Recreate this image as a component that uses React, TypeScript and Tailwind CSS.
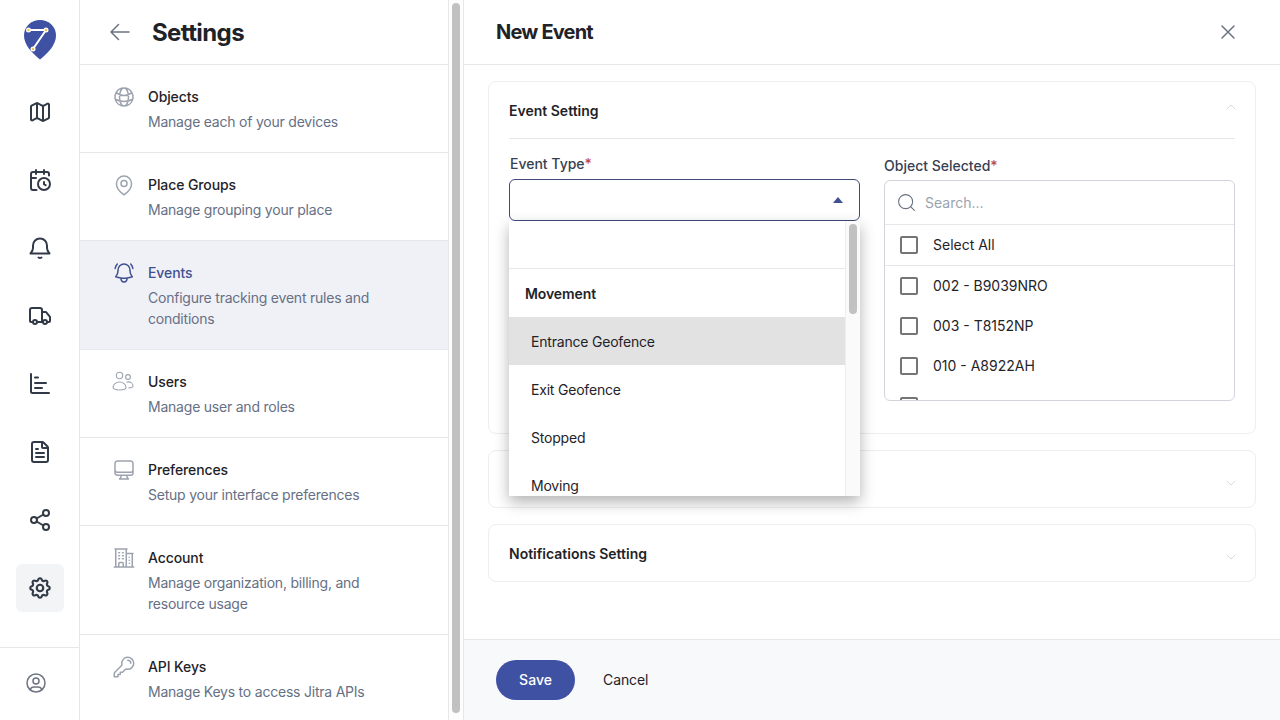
import type { ReactNode } from "react";
import { CalendarClock, ChevronDown, ChevronUp, FileText, Map, Search, Share2, Truck } from "lucide-react";
import { TbSettings, TbUserCircle } from "react-icons/tb";
import {
  HiOutlineArrowLeft,
  HiOutlineBellAlert,
  HiOutlineBuildingOffice2,
  HiOutlineComputerDesktop,
  HiOutlineGlobeAlt,
  HiOutlineKey,
  HiOutlineMapPin,
  HiOutlineXMark,
} from "react-icons/hi2";

function Logo() {
  return (
    <svg width="32" height="40" viewBox="0 0 32 40">
      <path d="M16 0C7 0 0 6.500 0 15.500C0 25 8 33 16 39.500C24 33 32 25 32 15.500C32 6.500 25 0 16 0Z" fill="#3f51a3" />
      <path d="M4.500 10H22L9 29" fill="none" stroke="#fff" strokeWidth="2" />
      <circle cx="4.500" cy="10" r="2.500" fill="#fff" />
      <circle cx="22" cy="10" r="2.500" fill="#fff" />
      <circle cx="9" cy="29" r="2.500" fill="#fff" />
      <circle cx="4.500" cy="10" r="1.300" fill="#e8c95a" />
      <circle cx="22" cy="10" r="1.300" fill="#e8c95a" />
      <circle cx="9" cy="29" r="1.300" fill="#e8c95a" />
    </svg>
  );
}

function BellIcon() {
  return (
    <svg width="24" height="24" viewBox="0 0 24 24" fill="none" stroke="currentColor" strokeWidth="2" strokeLinecap="round" strokeLinejoin="round">
      <path d="M2.500 17.500h19c-1.500-1.500-2.500-3-2.500-5.500V9.500a7 7 0 0 0-14 0V12c0 2.500-1 4-2.500 5.500Z" />
      <path d="M10.500 21.500c.8.500 2.200.500 3 0" />
    </svg>
  );
}

function ChartIcon() {
  return (
    <svg width="24" height="24" viewBox="0 0 24 24" fill="none" stroke="currentColor" strokeWidth="2" strokeLinecap="round" strokeLinejoin="round">
      <path d="M3 2V19.500a1.500 1.500 0 0 0 1.500 1.500H21" />
      <path d="M7 5.500h3" />
      <path d="M7 11h11" />
      <path d="M7 16h7" />
    </svg>
  );
}

function UsersIcon() {
  return (
    <svg width="22" height="22" viewBox="0 0 22 22" fill="none" stroke="currentColor" strokeWidth="1.100">
      <circle cx="7.500" cy="5.500" r="3.200" />
      <circle cx="16" cy="7" r="2.400" />
      <path d="M1 17.500c0-3 3-5.500 6.500-5.500s6.500 2.500 6.500 5.500c0 1.500-3 2.500-6.500 2.500S1 19 1 17.500Z" />
      <path d="M14.500 12.200c.5-.2 1-.3 1.700-.3 2.800 0 4.800 1.800 4.800 3.800 0 1.500-2 2.200-4.500 2.200" />
    </svg>
  );
}

const railItems: { key: string; icon: ReactNode; active?: boolean }[] = [
  { key: "map", icon: <Map size={24} strokeWidth={2} /> },
  { key: "calendar", icon: <CalendarClock size={24} strokeWidth={2} /> },
  { key: "bell", icon: <BellIcon /> },
  { key: "truck", icon: <Truck size={24} strokeWidth={2} /> },
  { key: "chart", icon: <ChartIcon /> },
  { key: "file", icon: <FileText size={24} strokeWidth={2} /> },
  { key: "share", icon: <Share2 size={24} strokeWidth={2} /> },
  { key: "settings", icon: <TbSettings size={26} strokeWidth={2} />, active: true },
];

const settingsRows = [
  { title: "Objects", desc: "Manage each of your devices", icon: <HiOutlineGlobeAlt size={24} /> },
  { title: "Place Groups", desc: "Manage grouping your place", icon: <HiOutlineMapPin size={24} /> },
  { title: "Events", desc: "Configure tracking event rules and conditions", icon: <HiOutlineBellAlert size={24} />, active: true },
  { title: "Users", desc: "Manage user and roles", icon: <UsersIcon /> },
  { title: "Preferences", desc: "Setup your interface preferences", icon: <HiOutlineComputerDesktop size={24} /> },
  { title: "Account", desc: "Manage organization, billing, and resource usage", icon: <HiOutlineBuildingOffice2 size={24} /> },
  { title: "API Keys", desc: "Manage Keys to access Jitra APIs", icon: <HiOutlineKey size={24} /> },
];

const eventTypes = ["Entrance Geofence", "Exit Geofence", "Stopped", "Moving"];
const objects = ["002 - B9039NRO", "003 - T8152NP", "010 - A8922AH"];

function Checkbox() {
  return <span className="w-[18px] h-[18px] shrink-0 border-2 border-[#757575] rounded-[2px]" />;
}

function SectionHeader({ title, open }: { title?: string; open?: boolean }) {
  return (
    <div className="h-14 flex items-center justify-between">
      <span className="pt-[2px] text-sm font-semibold text-[#1f2328]">{title}</span>
      {open ? (
        <ChevronUp size={16} strokeWidth={1.5} className="text-[#d8dbe0] -mr-[4px] -translate-y-[3px]" />
      ) : (
        <ChevronDown size={16} strokeWidth={1.5} className="text-[#d8dbe0] -mr-[4px] translate-y-[4px]" />
      )}
    </div>
  );
}

export default function App() {
  return (
    <div className="h-screen w-full flex overflow-hidden bg-white font-[Inter,sans-serif] text-[#1f2328]">
      <aside className="w-20 shrink-0 border-r border-[#e5e7eb] flex flex-col">
        <div className="pt-5 flex justify-center">
          <Logo />
        </div>
        <nav className="mt-7 flex flex-col items-center gap-5 flex-1 text-[#333a47]">
          {railItems.map((item) => (
            <div
              key={item.key}
              className={`w-12 h-12 flex items-center justify-center rounded-md ${item.active ? "bg-[#f3f4f6]" : ""}`}
            >
              {item.icon}
            </div>
          ))}
        </nav>
        <div className="h-[73px] border-t border-[#e5e7eb] flex items-center pl-[24px] pb-[2px] text-[#6b7280]">
          <TbUserCircle size={24} strokeWidth={1.5} />
        </div>
      </aside>

      <section className="w-[369px] shrink-0 border-r border-[#e5e7eb]">
        <div className="h-[65px] border-b border-[#e5e7eb] flex items-center pl-[28px]">
          <HiOutlineArrowLeft size={24} className="text-[#6b7280]" />
          <h1 className="ml-5 pt-px text-2xl font-bold tracking-[-0.6px] text-[#1f2328]">Settings</h1>
        </div>
        {settingsRows.map((row) => (
          <div
            key={row.title}
            className={`relative border-b border-[#e5e7eb] pl-[68px] pr-10 pt-[21px] pb-5 ${row.active ? "bg-[#f0f1f6]" : ""}`}
          >
            <div className={`absolute left-[32px] top-[20px] ${row.active ? "text-[#3f4f91]" : "text-[#9ca3af]"}`}>{row.icon}</div>
            <div className={`text-sm font-medium leading-[22px] tracking-[-0.1px] ${row.active ? "text-[#3f4f91]" : "text-[#1f2328]"}`}>{row.title}</div>
            <div className="mt-[3px] text-sm leading-[21px] tracking-[-0.22px] text-[#667085]">{row.desc}</div>
          </div>
        ))}
      </section>

      <div className="w-[15px] shrink-0 border-r border-[#e5e7eb] bg-[#fdfdfd] pt-[3px] pl-[3px]">
        <div className="w-2 h-[710px] rounded-full bg-[#c1c1c1]" />
      </div>

      <main className="flex-1 flex flex-col min-w-0">
        <header className="h-[65px] shrink-0 border-b border-[#e5e7eb] flex items-center justify-between pl-8 pr-[40px]">
          <h2 className="text-xl font-bold tracking-[-0.8px] text-[#1f2328]">New Event</h2>
          <HiOutlineXMark size={24} className="text-[#6b7280]" />
        </header>

        <div className="flex-1 px-6 pt-4 flex flex-col gap-4">
          <div className="border border-[#eceef1] rounded-lg px-5 pb-8">
            <SectionHeader title="Event Setting" open />
            <div className="border-t border-[#e5e7eb] flex gap-6">
              <div className="flex-1 pt-[15px]">
                <label className="block pl-px text-sm font-medium leading-5 text-[#374151] mb-[5px]">
                  Event Type<span className="text-[#c0484a]">*</span>
                </label>
                <div className="relative">
                  <div className="h-[42px] border border-[#3f4a7a] rounded-md flex items-center justify-end pr-4 bg-white">
                    <svg width="10" height="6" viewBox="0 0 10 6">
                      <polygon points="5,0 10,6 0,6" fill="#3f4f91" />
                    </svg>
                  </div>
                  <div className="absolute z-10 top-full left-0 right-0 h-[275px] flex bg-white overflow-hidden shadow-[0_6px_14px_rgba(0,0,0,0.3)]">
                    <div className="flex-1 overflow-hidden min-w-0">
                      <div className="h-[48px] border-b border-[#e5e7eb]" />
                      <div className="h-12 flex items-center pl-4 pt-[2px] text-sm font-semibold tracking-[-0.1px]">Movement</div>
                      {eventTypes.map((t, i) => (
                        <div key={t} className={`h-12 flex items-center pl-[22px] pt-[2px] text-sm tracking-[-0.2px] ${i === 0 ? "bg-[#e2e2e2]" : ""}`}>
                          {t}
                        </div>
                      ))}
                    </div>
                    <div className="w-[15px] shrink-0 border-l border-[#eeeeee] bg-[#fafafa] pt-[3px] pl-[3px]">
                      <div className="w-2 h-[90px] rounded-full bg-[#c1c1c1]" />
                    </div>
                  </div>
                </div>
              </div>

              <div className="flex-1 pt-[17px]">
                <label className="block text-sm font-medium leading-5 text-[#374151] mb-[4px]">
                  Object Selected<span className="text-[#c0484a]">*</span>
                </label>
                <div className="h-[221px] border border-[#d1d5db] rounded-md overflow-hidden">
                  <div className="h-[44px] border-b border-[#e5e7eb] flex items-center pl-[11px] gap-[8px]">
                    <Search size={21} strokeWidth={1.25} className="text-[#6b7280]" />
                    <span className="text-sm text-[#9ca3af]">Search...</span>
                  </div>
                  <div className="h-[41px] border-b border-[#e5e7eb] flex items-center pl-[15px] gap-[15px]">
                    <Checkbox />
                    <span className="text-sm">Select All</span>
                  </div>
                  {objects.map((o) => (
                    <div key={o} className="h-10 flex items-center pl-[15px] gap-[15px]">
                      <Checkbox />
                      <span className="text-sm">{o}</span>
                    </div>
                  ))}
                  <div className="h-10 flex items-center pl-[15px]">
                    <Checkbox />
                  </div>
                </div>
              </div>
            </div>
          </div>

          <div className="border border-[#eceef1] rounded-lg px-5">
            <SectionHeader />
          </div>
          <div className="border border-[#eceef1] rounded-lg px-5">
            <SectionHeader title="Notifications Setting" />
          </div>
        </div>

        <footer className="h-[81px] shrink-0 border-t border-[#e5e7eb] bg-[#f8f9fb] flex items-center pl-8">
          <button className="w-[79px] h-10 rounded-full bg-[#3f51a3] text-white text-sm font-medium">Save</button>
          <button className="ml-7 text-sm tracking-[-0.1px] text-[#1f2328]">Cancel</button>
        </footer>
      </main>
    </div>
  );
}
